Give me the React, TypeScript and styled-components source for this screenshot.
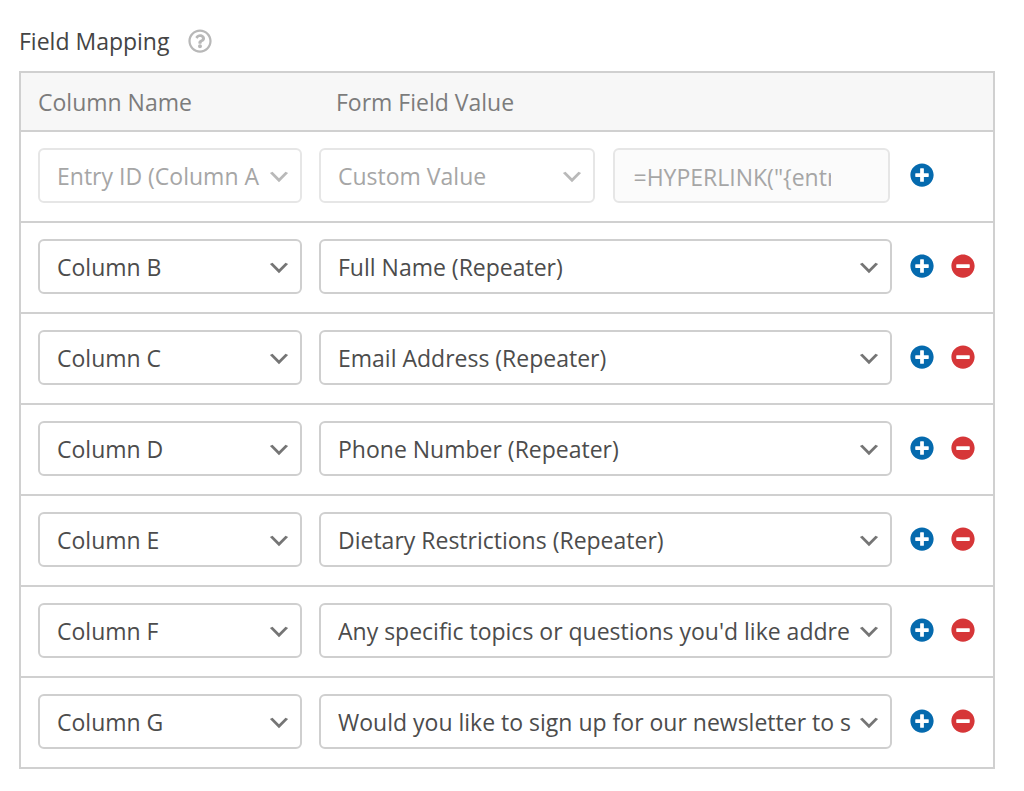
import React from "react";
import styled, { createGlobalStyle } from "styled-components";
import { FaMinusCircle, FaPlusCircle, FaRegQuestionCircle } from "react-icons/fa";

const GlobalStyle = createGlobalStyle`
  *, *::before, *::after { box-sizing: border-box; }
  body {
    margin: 0;
    background: #fff;
    color: #3c434a;
    font-family: "Segoe UI", "Open Sans", sans-serif;
    font-size: 23px;
    line-height: 32px;
  }
`;

const Section = styled.section`
  padding: 24px 29px 22px 19px;
`;

const Heading = styled.header`
  display: flex;
  align-items: center;
  gap: 19px;
  height: 34px;
  margin-bottom: 13px;
`;

const Title = styled.h2`
  margin: 0;
  font: inherit;
  color: #444;
`;

const IconButton = styled.button<{ $color: string }>`
  display: flex;
  padding: 0;
  border: 0;
  background: none;
  color: ${(p) => p.$color};
  font-size: 24px;
  line-height: 1;
  cursor: pointer;
`;

const MappingTable = styled.table`
  width: 100%;
  table-layout: fixed;
  border-collapse: separate;
  border-spacing: 0;
  border: 2px solid #d0d0d0;
`;

const NameCol = styled.col`
  width: 289px;
`;

const ActionsCol = styled.col`
  width: 101px;
`;

const HeadCell = styled.th`
  height: 59px;
  padding: 0 0 0 17px;
  border-bottom: 2px solid #d0d0d0;
  background: #f7f7f7;
  color: #7c7c7c;
  font-weight: 400;
  text-align: left;

  & + & {
    padding-left: 26px;
  }
`;

const Row = styled.tr`
  &:not(:last-child) > td {
    border-bottom: 2px solid #d0d0d0;
  }
`;

const NameCell = styled.td`
  padding: 16px 8px 18px 17px;
`;

const ValueCell = styled.td`
  padding: 16px 0 18px 9px;
`;

const ActionsCell = styled.td`
  padding: 16px 0 20px 18px;
`;

const Actions = styled.div`
  display: flex;
  gap: 17px;
`;

const Split = styled.div`
  display: grid;
  grid-template-columns: 1fr 1fr;
  gap: 18px;
  padding-right: 2px;
`;

const SelectBox = styled.div`
  position: relative;
`;

const Select = styled.select`
  appearance: none;
  display: block;
  width: 100%;
  height: 55px;
  padding: 0 38px 0 17px;
  border: 2px solid #cfcfcf;
  border-radius: 6px;
  background: #fff;
  color: #4c4c4c;
  font: inherit;

  &:disabled {
    border-color: #e6e6e6;
    color: #a6a6a6;
    opacity: 1;
  }
`;

const Chevron = styled.svg<{ $muted?: boolean }>`
  position: absolute;
  top: 16px;
  right: 10px;
  width: 26px;
  height: 26px;
  fill: ${(p) => (p.$muted ? "#b9b9b9" : "#757575")};
  pointer-events: none;
`;

const TextInput = styled.input`
  display: block;
  width: 100%;
  min-width: 0;
  height: 55px;
  padding: 2px 57px 0 18px;
  border: 2px solid #e6e6e6;
  border-radius: 6px;
  background: #fbfbfb;
  color: #a6a6a6;
  font: inherit;
`;

type DropdownProps = { label: string; value: string; disabled?: boolean };

function Dropdown({ label, value, disabled }: DropdownProps) {
  return (
    <SelectBox>
      <Select aria-label={label} defaultValue={value} disabled={disabled}>
        <option>{value}</option>
      </Select>
      <Chevron viewBox="0 0 20 20" $muted={disabled} aria-hidden="true">
        <path d="M5 6l5 5 5-5 2 1-7 7-7-7 2-1z" />
      </Chevron>
    </SelectBox>
  );
}

const AddButton = () => (
  <IconButton type="button" aria-label="Add row" $color="#056aae">
    <FaPlusCircle />
  </IconButton>
);

const RemoveButton = () => (
  <IconButton type="button" aria-label="Remove row" $color="#d63638">
    <FaMinusCircle />
  </IconButton>
);

const mappings = [
  { column: "Column B", field: "Full Name (Repeater)" },
  { column: "Column C", field: "Email Address (Repeater)" },
  { column: "Column D", field: "Phone Number (Repeater)" },
  { column: "Column E", field: "Dietary Restrictions (Repeater)" },
  { column: "Column F", field: "Any specific topics or questions you'd like addre" },
  { column: "Column G", field: "Would you like to sign up for our newsletter to s" },
];

export default function App() {
  return (
    <>
      <GlobalStyle />
      <Section>
        <Heading>
          <Title>Field Mapping</Title>
          <IconButton type="button" aria-label="Help" $color="#b8b8b8">
            <FaRegQuestionCircle />
          </IconButton>
        </Heading>
        <MappingTable>
          <colgroup>
            <NameCol />
            <col />
            <ActionsCol />
          </colgroup>
          <thead>
            <tr>
              <HeadCell scope="col">Column Name</HeadCell>
              <HeadCell scope="col" colSpan={2}>Form Field Value</HeadCell>
            </tr>
          </thead>
          <tbody>
            <Row>
              <NameCell>
                <Dropdown label="Column name" value="Entry ID (Column A" disabled />
              </NameCell>
              <ValueCell>
                <Split>
                  <Dropdown label="Form field value" value="Custom Value" disabled />
                  <TextInput
                    aria-label="Custom value"
                    defaultValue={'=HYPERLINK("{entry'}
                    disabled
                  />
                </Split>
              </ValueCell>
              <ActionsCell>
                <Actions>
                  <AddButton />
                </Actions>
              </ActionsCell>
            </Row>
            {mappings.map(({ column, field }) => (
              <Row key={column}>
                <NameCell>
                  <Dropdown label="Column name" value={column} />
                </NameCell>
                <ValueCell>
                  <Dropdown label="Form field value" value={field} />
                </ValueCell>
                <ActionsCell>
                  <Actions>
                    <AddButton />
                    <RemoveButton />
                  </Actions>
                </ActionsCell>
              </Row>
            ))}
          </tbody>
        </MappingTable>
      </Section>
    </>
  );
}
